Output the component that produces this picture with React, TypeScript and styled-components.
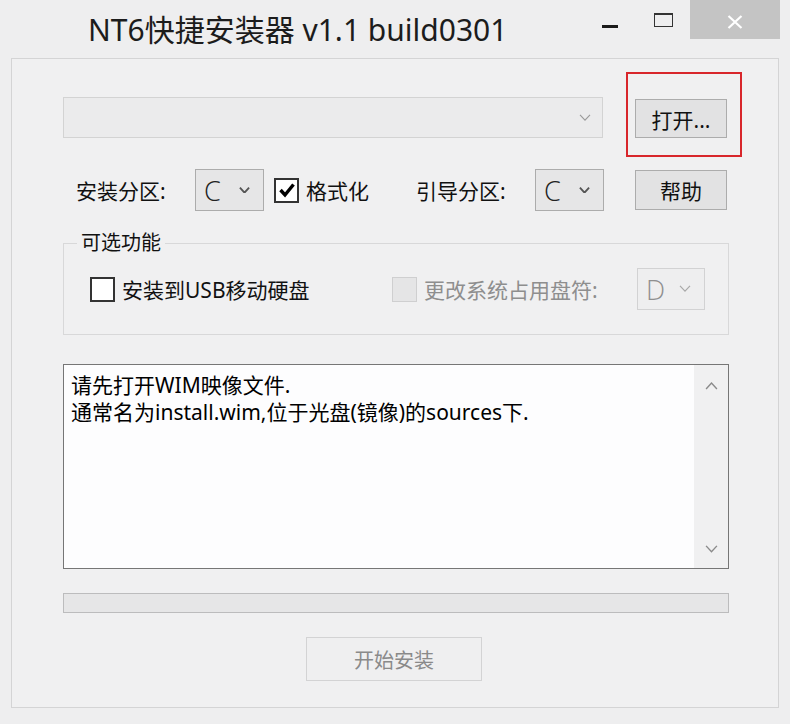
import React from 'react';
import styled, { createGlobalStyle } from 'styled-components';

const GlobalStyle = createGlobalStyle`
  html, body {
    margin: 0;
    padding: 0;
    background: #eeeeef;
  }
  body {
    font-family: "Noto Sans", "Noto Sans CJK SC", sans-serif;
    color: #111;
  }
`;

type CheckState = 'checked' | 'unchecked' | 'disabled';

const Chevron: React.FC<{ color: string; weight?: number; up?: boolean; w?: number }> = ({
  color,
  weight = 1.4,
  up,
  w = 12,
}) => (
  <svg width={w} height={w * 0.6} viewBox="0 0 12 7.2" fill="none">
    <polyline
      points={up ? '1,6.4 6,1 11,6.4' : '1,0.8 6,6.2 11,0.8'}
      stroke={color}
      strokeWidth={weight}
      strokeLinejoin="miter"
    />
  </svg>
);

const CheckBox: React.FC<{ state: CheckState }> = ({ state }) => (
  <Box $state={state}>
    {state === 'checked' && (
      <svg width="18" height="16" viewBox="0 0 18 16">
        <polyline points="2.5,8 7,13 15.5,2.5" fill="none" stroke="#000" strokeWidth="3.4" />
      </svg>
    )}
  </Box>
);

const App: React.FC = () => {
  return (
    <>
      <GlobalStyle />
      <Window>
        <TitleBar>
          <Title>NT6快捷安装器 v1.1 build0301</Title>
          <Controls>
            <CtrlButton $w={52}>
              <MinGlyph />
            </CtrlButton>
            <CtrlButton $w={54}>
              <MaxGlyph />
            </CtrlButton>
            <CtrlButton $w={90} $close>
              <svg width="16" height="14" viewBox="0 0 16 14" style={{ marginTop: 15 }}>
                <path d="M1.5 1 L14.5 13 M14.5 1 L1.5 13" stroke="#fff" strokeWidth="2.2" />
              </svg>
            </CtrlButton>
          </Controls>
        </TitleBar>

        <Panel>
          <Row $h={41}>
            <Combo>
              <Chevron color="#9a9a9a" weight={1.1} />
            </Combo>
            <Marked>
              <PushButton $w={92} $h={39}>打开...</PushButton>
            </Marked>
          </Row>

          <Row $h={42} $mt={31}>
            <FieldLabel $w={132} $pl={13}>安装分区:</FieldLabel>
            <DropSelect $w={69}>
              <span>C</span>
              <Chevron color="#555" weight={2} w={11} />
            </DropSelect>
            <CheckField $w={142} $ml={10}>
              <CheckBox state="checked" />
              <span>格式化</span>
            </CheckField>
            <FieldLabel $w={119}>引导分区:</FieldLabel>
            <DropSelect $w={69}>
              <span>C</span>
              <Chevron color="#555" weight={2} w={11} />
            </DropSelect>
            <PushButton $w={92} $h={40} $auto>帮助</PushButton>
          </Row>

          <Group>
            <Legend>可选功能</Legend>
            <CheckField $w={302}>
              <CheckBox state="unchecked" />
              <span>安装到USB移动硬盘</span>
            </CheckField>
            <CheckField $disabled>
              <CheckBox state="disabled" />
              <span>更改系统占用盘符:</span>
            </CheckField>
            <DropSelect $w={68} $disabled $auto>
              <span>D</span>
              <Chevron color="#a8a8a8" weight={1.2} />
            </DropSelect>
          </Group>

          <LogBox>
            <LogText>
              <div>请先打开WIM映像文件.</div>
              <div>通常名为install.wim,位于光盘(镜像)的sources下.</div>
            </LogText>
            <ScrollTrack>
              <Chevron color="#8a8a8a" weight={1.3} up w={13} />
              <Chevron color="#8a8a8a" weight={1.3} w={13} />
            </ScrollTrack>
          </LogBox>

          <Progress />

          <StartButton disabled>开始安装</StartButton>
        </Panel>
      </Window>
    </>
  );
};

const Window = styled.div`
  width: 790px;
  height: 724px;
  display: flex;
  flex-direction: column;
  background: #eeeeef;
  overflow: hidden;
`;

const TitleBar = styled.div`
  height: 58px;
  display: flex;
  align-items: flex-start;
`;

const Title = styled.div`
  flex: 1;
  margin: 10px 0 0 88px;
  font-family: "Noto Sans", "Noto Sans CJK SC", sans-serif;
  font-size: 30px;
  line-height: 40px;
  color: #1c1c1c;
  white-space: nowrap;
`;

const Controls = styled.div`
  display: flex;
  height: 39px;
  margin-right: 10px;
`;

const CtrlButton = styled.div<{ $w: number; $close?: boolean }>`
  width: ${(p) => p.$w}px;
  height: 39px;
  display: flex;
  justify-content: center;
  align-items: flex-start;
  background: ${(p) => (p.$close ? '#c4c4c4' : 'transparent')};
`;

const MinGlyph = styled.div`
  width: 16px;
  height: 3px;
  margin-top: 25px;
  background: #1a1a1a;
`;

const MaxGlyph = styled.div`
  width: 19px;
  height: 14px;
  margin-top: 13px;
  box-sizing: border-box;
  border: 1.5px solid #333;
  border-top-width: 2px;
`;

const Panel = styled.div`
  margin: 0 11px;
  height: 650px;
  box-sizing: border-box;
  border: 1px solid #d4d4d5;
  background: #f0f0f1;
  padding: 38px 49px 0 51px;
  display: flex;
  flex-direction: column;
  font-size: 21px;
`;

const Row = styled.div<{ $h: number; $mt?: number }>`
  display: flex;
  align-items: center;
  height: ${(p) => p.$h}px;
  margin-top: ${(p) => p.$mt ?? 0}px;
`;

const Combo = styled.div`
  width: 540px;
  height: 41px;
  box-sizing: border-box;
  border: 1px solid #d3d3d3;
  background: #ebebec;
  display: flex;
  align-items: center;
  justify-content: flex-end;
  padding-right: 11px;
`;

const Marked = styled.div`
  position: relative;
  margin-left: auto;
  margin-right: 2px;
  align-self: flex-start;
  margin-top: 2px;

  &::after {
    content: '';
    position: absolute;
    left: -9px;
    top: -27px;
    right: -15px;
    bottom: -19px;
    border: 2px solid #d8262b;
    pointer-events: none;
  }
`;

const PushButton = styled.div<{ $w: number; $h: number; $auto?: boolean }>`
  width: ${(p) => p.$w}px;
  height: ${(p) => p.$h}px;
  box-sizing: border-box;
  border: 1px solid #acacac;
  background: #e2e2e3;
  display: flex;
  align-items: center;
  justify-content: center;
  font-size: 21px;
  color: #111;
  ${(p) => (p.$auto ? 'margin-left: auto; margin-right: 2px;' : '')}
`;

const FieldLabel = styled.div<{ $w: number; $pl?: number }>`
  width: ${(p) => p.$w}px;
  padding-left: ${(p) => p.$pl ?? 0}px;
  box-sizing: border-box;
  font-size: 21px;
  white-space: nowrap;
`;

const DropSelect = styled.div<{ $w: number; $disabled?: boolean; $auto?: boolean }>`
  width: ${(p) => p.$w}px;
  height: 42px;
  box-sizing: border-box;
  border: 1px solid ${(p) => (p.$disabled ? '#d2d2d3' : '#acacac')};
  background: ${(p) => (p.$disabled ? '#eeeeef' : '#e6e6e7')};
  display: flex;
  align-items: center;
  justify-content: space-between;
  padding: 0 13px 0 8px;
  color: ${(p) => (p.$disabled ? '#8f8f8f' : '#222')};
  ${(p) => (p.$auto ? 'margin-left: auto;' : '')}

  span {
    font-family: "Open Sans", "Noto Sans", sans-serif;
    font-size: 27px;
    font-weight: 300;
    line-height: 1;
  }
`;

const CheckField = styled.div<{ $w?: number; $ml?: number; $disabled?: boolean }>`
  display: flex;
  align-items: center;
  gap: 7px;
  ${(p) => (p.$w ? `width: ${p.$w}px;` : '')}
  margin-left: ${(p) => p.$ml ?? 0}px;
  font-size: 21px;
  white-space: nowrap;
  color: ${(p) => (p.$disabled ? '#8e8e8e' : '#111')};
`;

const Box = styled.div<{ $state: CheckState }>`
  width: 25px;
  height: 25px;
  box-sizing: border-box;
  flex: none;
  display: flex;
  align-items: center;
  justify-content: center;
  border: ${(p) => (p.$state === 'disabled' ? '1px solid #cfcfd0' : '2px solid #333')};
  background: ${(p) => (p.$state === 'disabled' ? '#e5e5e6' : '#fff')};
`;

const Group = styled.div`
  position: relative;
  margin-top: 32px;
  height: 92px;
  box-sizing: border-box;
  border: 1px solid #d8d8d9;
  display: flex;
  align-items: center;
  padding: 0 23px 0 26px;
`;

const Legend = styled.div`
  position: absolute;
  top: -13px;
  left: 13px;
  padding: 0 4px;
  background: #f0f0f1;
  font-size: 20px;
  line-height: 24px;
`;

const LogBox = styled.div`
  margin-top: 29px;
  height: 205px;
  box-sizing: border-box;
  border: 1px solid #767676;
  background: #fdfdfe;
  display: flex;
`;

const LogText = styled.div`
  flex: 1;
  padding: 7px 0 0 7px;
  font-size: 21px;
  line-height: 27px;
  color: #000;
`;

const ScrollTrack = styled.div`
  width: 34px;
  background: #f0f0f1;
  display: flex;
  flex-direction: column;
  align-items: center;
  justify-content: space-between;
  padding: 17px 0 15px;
`;

const Progress = styled.div`
  margin-top: 24px;
  height: 20px;
  box-sizing: border-box;
  border: 1px solid #bcbcbd;
  background: #e6e6e7;
`;

const StartButton = styled.button`
  margin: 24px 0 0 243px;
  align-self: flex-start;
  width: 176px;
  height: 44px;
  box-sizing: border-box;
  border: 1px solid #d3d3d4;
  background: #efeff0;
  font-family: "Noto Sans", "Noto Sans CJK SC", sans-serif;
  font-size: 20px;
  color: #8a8a8a;
  padding: 0;
`;

export default App;
